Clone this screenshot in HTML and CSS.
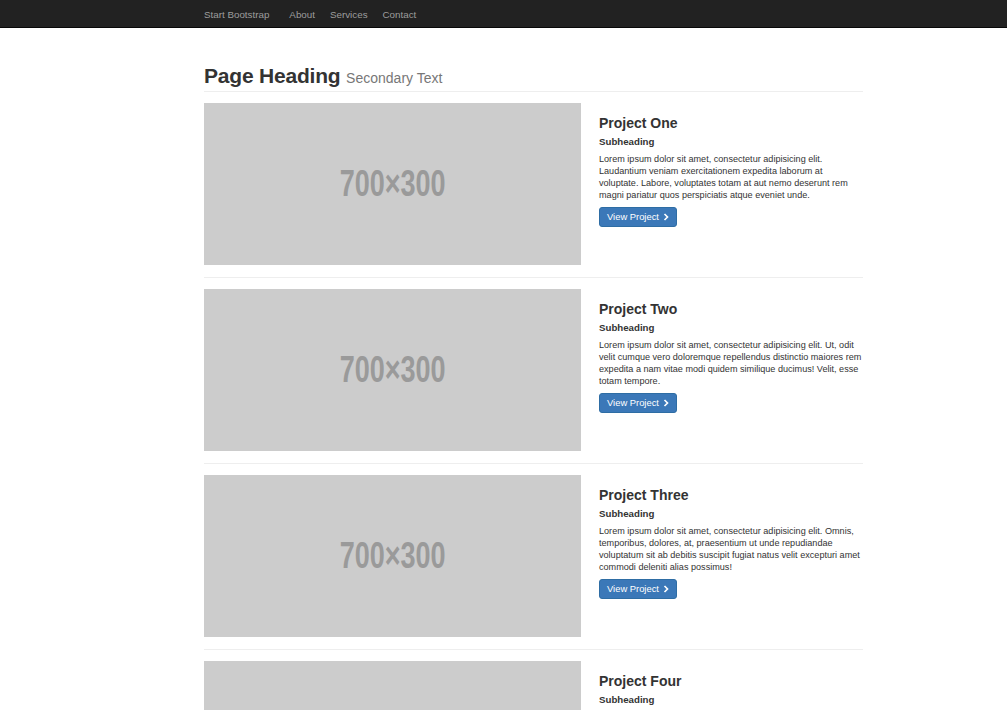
FILE: index.html
```html
<!DOCTYPE html>
<html>
<head>
<meta charset="utf-8">
<title>Portfolio</title>
<link rel="stylesheet" href="styles.css">
</head>
<body>
<nav class="navbar">
  <div class="container nav-inner">
    <a class="brand" href="#">Start Bootstrap</a>
    <a class="nav-link" href="#">About</a>
    <a class="nav-link" href="#">Services</a>
    <a class="nav-link" href="#">Contact</a>
  </div>
</nav>
<main class="container">
  <h1 class="page-header">Page Heading <small>Secondary Text</small></h1>

  <section class="project">
    <div class="thumb"><span>700×300</span></div>
    <div class="info">
      <h3>Project One</h3>
      <h4>Subheading</h4>
      <p>Lorem ipsum dolor sit amet, consectetur adipisicing elit. Laudantium veniam exercitationem expedita laborum at voluptate. Labore, voluptates totam at aut nemo deserunt rem magni pariatur quos perspiciatis atque eveniet unde.</p>
      <a class="btn" href="#">View Project <svg viewBox="0 0 8 10" width="6" height="8"><path d="M2 1 L6 5 L2 9" fill="none" stroke="#fff" stroke-width="2.2"/></svg></a>
    </div>
  </section>
  <hr>
  <section class="project">
    <div class="thumb"><span>700×300</span></div>
    <div class="info">
      <h3>Project Two</h3>
      <h4>Subheading</h4>
      <p>Lorem ipsum dolor sit amet, consectetur adipisicing elit. Ut, odit velit cumque vero doloremque repellendus distinctio maiores rem expedita a nam vitae modi quidem similique ducimus! Velit, esse totam tempore.</p>
      <a class="btn" href="#">View Project <svg viewBox="0 0 8 10" width="6" height="8"><path d="M2 1 L6 5 L2 9" fill="none" stroke="#fff" stroke-width="2.2"/></svg></a>
    </div>
  </section>
  <hr>
  <section class="project">
    <div class="thumb"><span>700×300</span></div>
    <div class="info">
      <h3>Project Three</h3>
      <h4>Subheading</h4>
      <p>Lorem ipsum dolor sit amet, consectetur adipisicing elit. Omnis, temporibus, dolores, at, praesentium ut unde repudiandae voluptatum sit ab debitis suscipit fugiat natus velit excepturi amet commodi deleniti alias possimus!</p>
      <a class="btn" href="#">View Project <svg viewBox="0 0 8 10" width="6" height="8"><path d="M2 1 L6 5 L2 9" fill="none" stroke="#fff" stroke-width="2.2"/></svg></a>
    </div>
  </section>
  <hr>
  <section class="project">
    <div class="thumb"><span>700×300</span></div>
    <div class="info">
      <h3>Project Four</h3>
      <h4>Subheading</h4>
      <p>Lorem ipsum dolor sit amet, consectetur adipisicing elit. Explicabo, quidem, consectetur, officia rem officiis illum aliquam perspiciatis aspernatur quod modi hic nemo qui soluta aut eius fugit quam in suscipit?</p>
      <a class="btn" href="#">View Project <svg viewBox="0 0 8 10" width="6" height="8"><path d="M2 1 L6 5 L2 9" fill="none" stroke="#fff" stroke-width="2.2"/></svg></a>
    </div>
  </section>
</main>
</body>
</html>
```

FILE: styles.css
```css
html, body {
  margin: 0;
  padding: 0;
  background: #fff;
  font-family: "Liberation Sans", Arial, sans-serif;
  color: #333;
}

.container {
  width: 659px;
  margin-left: 204px;
}

.navbar {
  background: #222;
  height: 28px;
  border-bottom: 1px solid #080808;
  box-sizing: border-box;
}

.nav-inner {
  display: flex;
  align-items: center;
  height: 28px;
}

.navbar a {
  color: #9d9d9d;
  text-decoration: none;
  font-size: 9.8px;
}

.brand {
  margin-right: 20px;
}

.nav-link {
  margin-right: 15px;
}

.page-header {
  margin: 36px 0 11px;
  padding-bottom: 1px;
  border-bottom: 1px solid #eee;
  font-size: 21px;
  font-weight: bold;
  line-height: 24px;
  color: #333;
  letter-spacing: -0.2px;
}

.page-header small {
  font-size: 14px;
  font-weight: normal;
  color: #777;
  letter-spacing: 0;
}

.project {
  display: flex;
  gap: 18px;
}

.thumb {
  width: 377px;
  height: 162px;
  background: #ccc;
  display: flex;
  align-items: center;
  justify-content: center;
  flex-shrink: 0;
}

.thumb span {
  font-size: 36px;
  font-weight: bold;
  color: #9a9a9a;
  transform: scaleX(0.75);
  display: inline-block;
  line-height: 1;
}

.info {
  flex: 1;
  padding-top: 12px;
}

.info h3 {
  margin: 0;
  font-size: 14px;
  font-weight: bold;
  line-height: 17px;
  color: #333;
}

.info h4 {
  margin: 4px 0 5px;
  font-size: 9.7px;
  font-weight: bold;
  line-height: 12px;
  color: #333;
}

.info p {
  margin: 0 0 5px;
  font-size: 9.1px;
  line-height: 12px;
  color: #333;
}

.btn {
  display: inline-flex;
  align-items: center;
  gap: 4px;
  height: 20px;
  padding: 0 7px 0 7px;
  box-sizing: border-box;
  background: #3b78b8;
  border: 1px solid #2e6da4;
  border-radius: 3px;
  color: #fff;
  font-size: 9.4px;
  text-decoration: none;
}

hr {
  margin: 12px 0 11px;
  border: 0;
  border-top: 1px solid #eee;
}
```
